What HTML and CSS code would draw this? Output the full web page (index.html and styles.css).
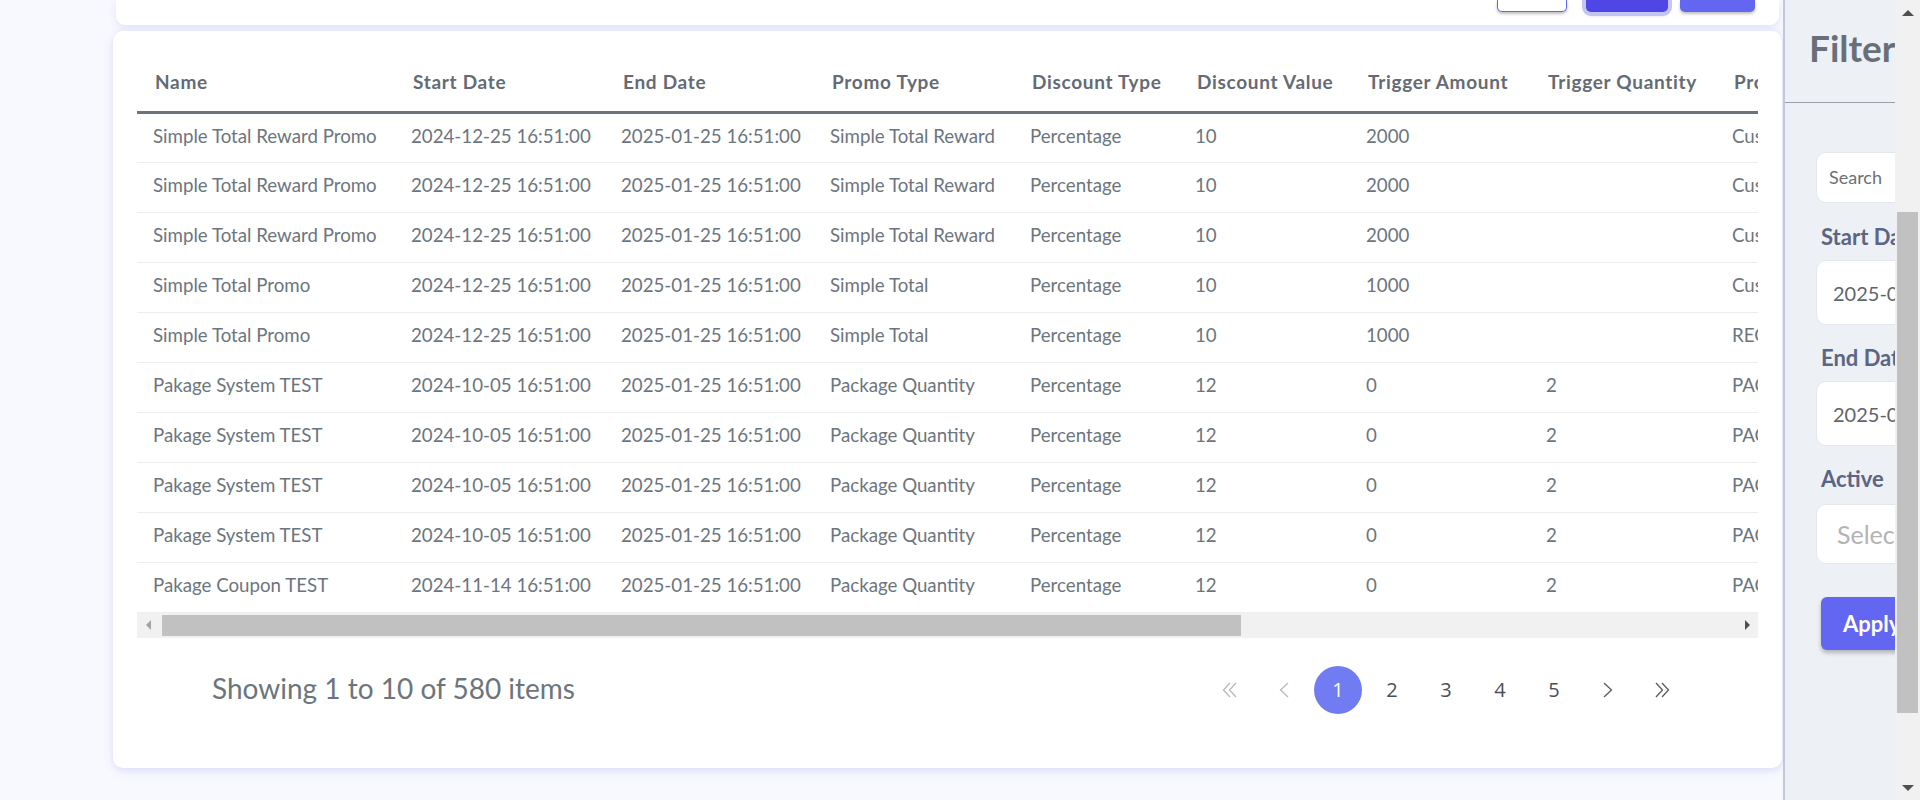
FILE: index.html
```html
<!DOCTYPE html>
<html lang="en">
<head>
<meta charset="utf-8">
<title>Promotions</title>
<link rel="stylesheet" href="styles.css">
</head>
<body>
<div class="page">
  <main class="main">
    <div class="top-card">
      <div class="top-actions">
        <span class="btn btn-outline"></span>
        <span class="btn btn-dark"></span>
        <span class="btn btn-primary"></span>
      </div>
    </div>

    <section class="table-card">
      <div class="table-wrap">
        <table class="data-table">
          <colgroup>
            <col style="width:258px"><col style="width:210px"><col style="width:209px"><col style="width:200px">
            <col style="width:165px"><col style="width:171px"><col style="width:180px"><col style="width:186px">
            <col style="width:220px"><col style="width:200px"><col style="width:180px"><col style="width:181px">
          </colgroup>
          <thead>
            <tr>
              <th>Name</th><th>Start Date</th><th>End Date</th><th>Promo Type</th><th>Discount Type</th>
              <th>Discount Value</th><th>Trigger Amount</th><th>Trigger Quantity</th><th>Promo Code</th>
              <th>Status</th><th>Created At</th><th>Actions</th>
            </tr>
          </thead>
          <tbody>
            <tr><td>Simple Total Reward Promo</td><td>2024-12-25 16:51:00</td><td>2025-01-25 16:51:00</td><td>Simple Total Reward</td><td>Percentage</td><td>10</td><td>2000</td><td></td><td>Customer Reward</td><td>Active</td><td>2024-12-25</td><td>Edit</td></tr>
            <tr><td>Simple Total Reward Promo</td><td>2024-12-25 16:51:00</td><td>2025-01-25 16:51:00</td><td>Simple Total Reward</td><td>Percentage</td><td>10</td><td>2000</td><td></td><td>Customer Reward</td><td>Active</td><td>2024-12-25</td><td>Edit</td></tr>
            <tr><td>Simple Total Reward Promo</td><td>2024-12-25 16:51:00</td><td>2025-01-25 16:51:00</td><td>Simple Total Reward</td><td>Percentage</td><td>10</td><td>2000</td><td></td><td>Customer Reward</td><td>Active</td><td>2024-12-25</td><td>Edit</td></tr>
            <tr><td>Simple Total Promo</td><td>2024-12-25 16:51:00</td><td>2025-01-25 16:51:00</td><td>Simple Total</td><td>Percentage</td><td>10</td><td>1000</td><td></td><td>Customer Total</td><td>Active</td><td>2024-12-25</td><td>Edit</td></tr>
            <tr><td>Simple Total Promo</td><td>2024-12-25 16:51:00</td><td>2025-01-25 16:51:00</td><td>Simple Total</td><td>Percentage</td><td>10</td><td>1000</td><td></td><td>REGULAR</td><td>Active</td><td>2024-12-25</td><td>Edit</td></tr>
            <tr><td>Pakage System TEST</td><td>2024-10-05 16:51:00</td><td>2025-01-25 16:51:00</td><td>Package Quantity</td><td>Percentage</td><td>12</td><td>0</td><td>2</td><td>PACKAGE</td><td>Active</td><td>2024-10-05</td><td>Edit</td></tr>
            <tr><td>Pakage System TEST</td><td>2024-10-05 16:51:00</td><td>2025-01-25 16:51:00</td><td>Package Quantity</td><td>Percentage</td><td>12</td><td>0</td><td>2</td><td>PACKAGE</td><td>Active</td><td>2024-10-05</td><td>Edit</td></tr>
            <tr><td>Pakage System TEST</td><td>2024-10-05 16:51:00</td><td>2025-01-25 16:51:00</td><td>Package Quantity</td><td>Percentage</td><td>12</td><td>0</td><td>2</td><td>PACKAGE</td><td>Active</td><td>2024-10-05</td><td>Edit</td></tr>
            <tr><td>Pakage System TEST</td><td>2024-10-05 16:51:00</td><td>2025-01-25 16:51:00</td><td>Package Quantity</td><td>Percentage</td><td>12</td><td>0</td><td>2</td><td>PACKAGE</td><td>Active</td><td>2024-10-05</td><td>Edit</td></tr>
            <tr><td>Pakage Coupon TEST</td><td>2024-11-14 16:51:00</td><td>2025-01-25 16:51:00</td><td>Package Quantity</td><td>Percentage</td><td>12</td><td>0</td><td>2</td><td>PACKAGE</td><td>Active</td><td>2024-11-14</td><td>Edit</td></tr>
          </tbody>
        </table>
      </div>

      <div class="hscroll">
        <span class="hs-btn"><span class="tri tri-left"></span></span>
        <span class="hs-track"><span class="hs-thumb"></span></span>
        <span class="hs-btn"><span class="tri tri-right"></span></span>
      </div>

      <div class="footer">
        <div class="showing">Showing 1 to 10 of 580 items</div>
        <nav class="pager">
          <span class="pg pg-disabled">
            <svg width="16" height="16" viewBox="0 0 16 16"><polyline points="8,1 1.5,8 8,15" /><polyline points="14,1 7.5,8 14,15" /></svg>
          </span>
          <span class="pg pg-disabled">
            <svg width="10" height="16" viewBox="0 0 10 16"><polyline points="9,1 1.5,8 9,15" /></svg>
          </span>
          <span class="pg pg-active">1</span>
          <span class="pg">2</span>
          <span class="pg">3</span>
          <span class="pg">4</span>
          <span class="pg">5</span>
          <span class="pg">
            <svg width="10" height="16" viewBox="0 0 10 16"><polyline points="1,1 8.5,8 1,15" /></svg>
          </span>
          <span class="pg">
            <svg width="16" height="16" viewBox="0 0 16 16"><polyline points="2,1 8.5,8 2,15" /><polyline points="8,1 14.5,8 8,15" /></svg>
          </span>
        </nav>
      </div>
    </section>
  </main>

  <aside class="sidebar">
    <div class="sidebar-inner">
      <div class="filter-head"><h2 class="filter-title">Filter</h2></div>
      <form class="filter-form">
        <input class="field field-search" type="text" placeholder="Search">
        <label class="flabel">Start Date</label>
        <div class="field field-date">2025-01-01</div>
        <label class="flabel">End Date</label>
        <div class="field field-date">2025-01-31</div>
        <label class="flabel">Active</label>
        <div class="field field-select">Select...</div>
        <button class="apply" type="button">Apply Filter</button>
      </form>
    </div>
  </aside>

  <div class="vscroll">
    <span class="vs-btn"><span class="tri tri-up"></span></span>
    <span class="vs-track"><span class="vs-thumb"></span></span>
    <span class="vs-btn"><span class="tri tri-down"></span></span>
  </div>
</div>
</body>
</html>
```

FILE: styles.css
```css
* { box-sizing: border-box; }

html, body {
  margin: 0;
  padding: 0;
  height: 800px;
  overflow: hidden;
}

body {
  font-family: "Lato", "Open Sans", sans-serif;
  background: #f8f9fe;
  color: #6c757d;
}

.page {
  display: flex;
  height: 800px;
  width: 1920px;
}

/* ---------- main ---------- */
.main {
  width: 1783px;
  flex: none;
  padding: 0 1px 0 113px;
  display: flex;
  flex-direction: column;
}

.top-card {
  height: 25px;
  margin: 0 3px;
  background: #ffffff;
  border-radius: 0 0 9px 9px;
  box-shadow: 0 3px 8px rgba(99, 102, 241, 0.14);
  display: flex;
  justify-content: flex-end;
  align-items: flex-start;
  padding-right: 24px;
}

.top-actions {
  display: flex;
  align-items: flex-start;
}

.btn {
  display: block;
  height: 12px;
  border-radius: 0 0 5px 5px;
  box-shadow: 0 2px 3px rgba(0, 0, 0, 0.25);
}

.btn-outline {
  width: 70px;
  background: #ffffff;
  border: 1px solid #6366f1;
  border-top: none;
}

.btn-dark {
  width: 82px;
  margin-left: 19px;
  background: #4f46e5;
  box-shadow: 0 0 0 4px #c3c5f4, 0 3px 4px rgba(0, 0, 0, 0.2);
}

.btn-primary {
  width: 75px;
  margin-left: 12px;
  background: #6366f1;
}

.table-card {
  margin-top: 6px;
  height: 737px;
  background: #ffffff;
  border-radius: 10px;
  box-shadow: 0 3px 10px rgba(99, 102, 241, 0.16), 2px 0 8px rgba(0, 0, 0, 0.04);
  padding: 24px 24px 0 24px;
  display: flex;
  flex-direction: column;
}

.table-wrap {
  width: 1621px;
  overflow: hidden;
}

.data-table {
  table-layout: fixed;
  width: 2360px;
  border-collapse: collapse;
  font-size: 18.7px;
}

.data-table th {
  height: 57px;
  padding: 0 0 2px 18px;
  text-align: left;
  font-size: 19px;
  font-weight: 700;
  letter-spacing: 0.7px;
  color: #646b74;
  white-space: nowrap;
  overflow: hidden;
  border-bottom: 3px solid #6c737d;
  vertical-align: middle;
}

.data-table td {
  height: 50px;
  padding: 0 0 4px 16px;
  color: #6c757d;
  white-space: nowrap;
  overflow: hidden;
  border-bottom: 1px solid #eeeeee;
  vertical-align: middle;
}

/* fake horizontal scrollbar */
.hscroll {
  display: flex;
  width: 1621px;
  height: 25px;
  background: #f1f1f1;
}

.hs-btn {
  width: 25px;
  flex: none;
  display: flex;
  align-items: center;
  justify-content: center;
}

.hs-track {
  flex: 1;
  display: flex;
  align-items: center;
  padding-top: 1px;
}

.hs-thumb {
  display: block;
  width: 1079px;
  height: 21px;
  background: #c1c1c1;
}

.tri {
  display: block;
  width: 0;
  height: 0;
}

.tri-left {
  border-top: 5px solid transparent;
  border-bottom: 5px solid transparent;
  border-right: 5px solid #a3a3a3;
  margin-right: 3px;
}

.tri-right {
  border-top: 5px solid transparent;
  border-bottom: 5px solid transparent;
  border-left: 5px solid #505050;
  margin-left: 3px;
}

.tri-up {
  border-left: 6px solid transparent;
  border-right: 6px solid transparent;
  border-bottom: 6px solid #505050;
}

.tri-down {
  border-left: 6px solid transparent;
  border-right: 6px solid transparent;
  border-top: 6px solid #505050;
}

/* footer */
.footer {
  display: flex;
  justify-content: space-between;
  align-items: center;
  padding: 28px 72px 0 75px;
}

.showing {
  font-size: 28px;
  color: #6c757d;
  padding-bottom: 3px;
}

.pager {
  display: flex;
  align-items: center;
  gap: 6px;
}

.pg {
  width: 48px;
  height: 48px;
  border-radius: 50%;
  display: flex;
  align-items: center;
  justify-content: center;
  font-family: "Open Sans", "Noto Sans", sans-serif;
  font-size: 20px;
  color: #495057;
}

.pg svg {
  fill: none;
  stroke: #555b63;
  stroke-width: 1.3;
}

.pg-disabled svg {
  stroke: #b8b8b8;
}

.pg-active {
  background: #717cf2;
  color: #ffffff;
}

/* ---------- sidebar ---------- */
.sidebar {
  width: 112px;
  flex: none;
  overflow: hidden;
  background: #edf0f5;
  border-left: 2px solid #c3c6e2;
}

.sidebar-inner {
  width: 320px;
}

.filter-head {
  height: 103px;
  border-bottom: 1px solid #9a9ea4;
  display: flex;
  align-items: center;
  padding: 0 0 8px 24px;
}

.filter-title {
  margin: 0;
  font-size: 37px;
  font-weight: 700;
  color: #686f78;
}

.filter-form {
  padding: 49px 0 0 31px;
  display: flex;
  flex-direction: column;
  align-items: flex-start;
}

.field {
  width: 260px;
  background: #ffffff;
  border: 1px solid #e4e7ee;
  border-radius: 10px;
  display: flex;
  align-items: center;
  font-family: "Lato", "Open Sans", sans-serif;
}

.field-search {
  height: 51px;
  padding: 0 0 2px 12px;
  font-size: 18px;
  outline: none;
}

.field-search::placeholder {
  color: #6c7077;
}

.flabel {
  display: block;
  margin: 22px 0 0 5px;
  line-height: 24px;
  font-size: 22px;
  font-weight: 700;
  color: #5b6584;
}

.field-date {
  height: 65px;
  margin-top: 11px;
  padding-left: 16px;
  font-size: 20px;
  color: #5f646b;
}

.field-select {
  height: 60px;
  margin-top: 13px;
  padding-left: 20px;
  font-size: 25px;
  color: #b3b3b3;
}

.filter-form .flabel:nth-of-type(2),
.filter-form .flabel:nth-of-type(3) {
  margin-top: 21px;
}

.apply {
  margin: 33px 0 0 5px;
  height: 53px;
  padding: 0 22px;
  border: none;
  border-radius: 6px;
  background: #6366f1;
  color: #ffffff;
  font-family: "Lato", "Open Sans", sans-serif;
  font-size: 22px;
  font-weight: 700;
  white-space: nowrap;
  box-shadow: 0 3px 4px rgba(0, 0, 0, 0.25);
}

/* ---------- page scrollbar ---------- */
.vscroll {
  width: 25px;
  flex: none;
  background: #f1f1f1;
  display: flex;
  flex-direction: column;
}

.vs-btn {
  height: 25px;
  flex: none;
  display: flex;
  align-items: center;
  justify-content: center;
}

.vs-track {
  flex: 1;
  display: flex;
  justify-content: center;
  padding-top: 187px;
}

.vs-thumb {
  display: block;
  width: 21px;
  height: 501px;
  background: #c1c1c1;
}
```
